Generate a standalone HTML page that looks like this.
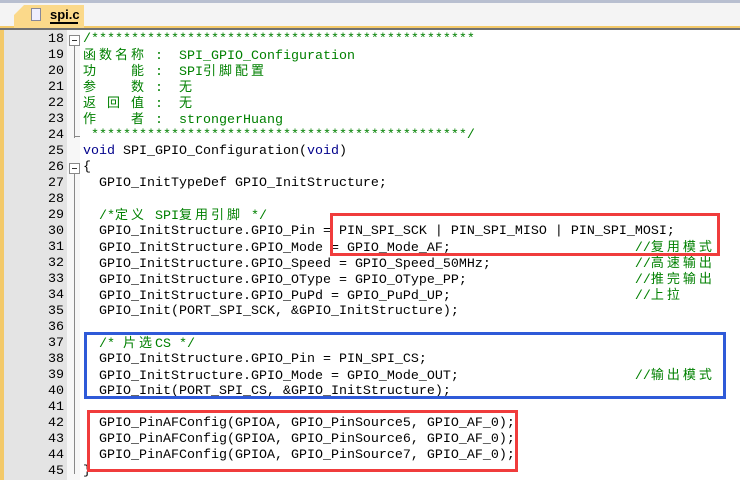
<!DOCTYPE html>
<html><head><meta charset="utf-8"><style>
body{margin:0;width:740px;height:480px;overflow:hidden;background:#fff;position:relative;font-family:"Liberation Mono","Noto Sans CJK SC",monospace;font-size:13.33px}
.top{position:absolute;left:0;top:0;width:740px;height:3px;background:#b8bfd0}
.bar{position:absolute;left:0;top:3px;width:740px;height:23px;background:#f4f4f4}
.yl{position:absolute;left:0;top:26px;width:740px;height:2px;background:#f3c969}
.dk{position:absolute;left:0;top:28px;width:740px;height:2px;background:#707070}
.tab{position:absolute;left:14px;top:5px;width:70px;height:23px;background:#fbd98a;clip-path:polygon(10px 0,100% 0,100% 100%,0 100%,0 10px)}
.tabt{position:absolute;left:50px;top:7px;font-weight:bold;font-size:13px;font-family:"Liberation Sans",sans-serif;border-bottom:2px solid #000;line-height:15px;width:28px;color:#000}
.ico{position:absolute;left:31px;top:8px;width:8px;height:11px;border:1px solid #889;background:#eef}
.lb{position:absolute;left:0;top:30px;width:4px;height:450px;background:#f3c969}
.gut{position:absolute;left:4px;top:30px;width:63px;height:450px;background:#e4e4e4}
.fold{position:absolute;left:67px;top:30px;width:13px;height:450px;background:#f7f7f7}
.w{position:absolute;left:0;top:2px;width:740px;height:478px}
.ln{position:absolute;left:4px;width:60px;text-align:right;color:#000;height:16px;line-height:16px}
.c{position:absolute;left:83px;height:16px;line-height:16px;white-space:pre;color:#000}
.g{color:#008000}.k{color:#00008b}
i{font-style:normal;display:inline-block;width:16px;text-align:left;font-size:13px}
.box{position:absolute;border:3px solid}
.fb{position:absolute;left:69px;width:9px;height:9px;border:1px solid #888;background:#fff}
.fb:after{content:"";position:absolute;left:2px;top:4px;width:5px;height:1px;background:#333}
.vl{position:absolute;left:74px;width:1px;background:#888}
</style></head><body>
<div class="top"></div><div class="bar"></div><div class="yl"></div><div class="dk"></div>
<div class="tab"></div><div class="ico"></div><div class="tabt">spi.c</div>
<div class="lb"></div><div class="gut"></div><div class="fold"></div>
<div class="w">
<div class="vl" style="top:44px;height:92px"></div>
<div class="vl" style="top:172px;height:300px"></div>
<div class="vl" style="top:134px;left:74px;width:6px;height:1px"></div>
<div class="fb" style="top:33px"></div>
<div class="fb" style="top:161px"></div>

<div class="ln" style="top:30px">18</div><div class="c g" style="top:30px">/************************************************</div>
<div class="ln" style="top:46px">19</div><div class="c g" style="top:46px"><i>函</i><i>数</i><i>名</i><i>称</i> :  SPI_GPIO_Configuration</div>
<div class="ln" style="top:62px">20</div><div class="c g" style="top:62px"><i>功</i>    <i>能</i> :  SPI<i>引</i><i>脚</i><i>配</i><i>置</i></div>
<div class="ln" style="top:78px">21</div><div class="c g" style="top:78px"><i>参</i>    <i>数</i> :  <i>无</i></div>
<div class="ln" style="top:94px">22</div><div class="c g" style="top:94px"><i>返</i> <i>回</i> <i>值</i> :  <i>无</i></div>
<div class="ln" style="top:110px">23</div><div class="c g" style="top:110px"><i>作</i>    <i>者</i> :  strongerHuang</div>
<div class="ln" style="top:126px">24</div><div class="c g" style="top:126px"> ***********************************************/</div>
<div class="ln" style="top:142px">25</div><div class="c" style="top:142px"><span class="k">void</span> SPI_GPIO_Configuration(<span class="k">void</span>)</div>
<div class="ln" style="top:158px">26</div><div class="c" style="top:158px">{</div>
<div class="ln" style="top:174px">27</div><div class="c" style="top:174px">  GPIO_InitTypeDef GPIO_InitStructure;</div>
<div class="ln" style="top:190px">28</div>
<div class="ln" style="top:206px">29</div><div class="c g" style="top:206px">  /*<i>定</i><i>义</i> SPI<i>复</i><i>用</i><i>引</i><i>脚</i> */</div>
<div class="ln" style="top:222px">30</div><div class="c" style="top:222px">  GPIO_InitStructure.GPIO_Pin = PIN_SPI_SCK | PIN_SPI_MISO | PIN_SPI_MOSI;</div>
<div class="ln" style="top:238px">31</div><div class="c" style="top:238px">  GPIO_InitStructure.GPIO_Mode = GPIO_Mode_AF;                       <span class="g">//<i>复</i><i>用</i><i>模</i><i>式</i></span></div>
<div class="ln" style="top:254px">32</div><div class="c" style="top:254px">  GPIO_InitStructure.GPIO_Speed = GPIO_Speed_50MHz;                  <span class="g">//<i>高</i><i>速</i><i>输</i><i>出</i></span></div>
<div class="ln" style="top:270px">33</div><div class="c" style="top:270px">  GPIO_InitStructure.GPIO_OType = GPIO_OType_PP;                     <span class="g">//<i>推</i><i>完</i><i>输</i><i>出</i></span></div>
<div class="ln" style="top:286px">34</div><div class="c" style="top:286px">  GPIO_InitStructure.GPIO_PuPd = GPIO_PuPd_UP;                       <span class="g">//<i>上</i><i>拉</i></span></div>
<div class="ln" style="top:302px">35</div><div class="c" style="top:302px">  GPIO_Init(PORT_SPI_SCK, &amp;GPIO_InitStructure);</div>
<div class="ln" style="top:318px">36</div>
<div class="ln" style="top:334px">37</div><div class="c g" style="top:334px">  /* <i>片</i><i>选</i>CS */</div>
<div class="ln" style="top:350px">38</div><div class="c" style="top:350px">  GPIO_InitStructure.GPIO_Pin = PIN_SPI_CS;</div>
<div class="ln" style="top:366px">39</div><div class="c" style="top:366px">  GPIO_InitStructure.GPIO_Mode = GPIO_Mode_OUT;                      <span class="g">//<i>输</i><i>出</i><i>模</i><i>式</i></span></div>
<div class="ln" style="top:382px">40</div><div class="c" style="top:382px">  GPIO_Init(PORT_SPI_CS, &amp;GPIO_InitStructure);</div>
<div class="ln" style="top:398px">41</div>
<div class="ln" style="top:414px">42</div><div class="c" style="top:414px">  GPIO_PinAFConfig(GPIOA, GPIO_PinSource5, GPIO_AF_0);</div>
<div class="ln" style="top:430px">43</div><div class="c" style="top:430px">  GPIO_PinAFConfig(GPIOA, GPIO_PinSource6, GPIO_AF_0);</div>
<div class="ln" style="top:446px">44</div><div class="c" style="top:446px">  GPIO_PinAFConfig(GPIOA, GPIO_PinSource7, GPIO_AF_0);</div>
<div class="ln" style="top:462px">45</div><div class="c" style="top:462px">}</div>
</div>
<div class="box" style="left:330px;top:213px;width:384px;height:37px;border-color:#f03c3c"></div>
<div class="box" style="left:84px;top:332px;width:636px;height:61px;border-color:#2f5ad8"></div>
<div class="box" style="left:87px;top:410px;width:425px;height:56px;border-color:#f03c3c"></div>
</body></html>
